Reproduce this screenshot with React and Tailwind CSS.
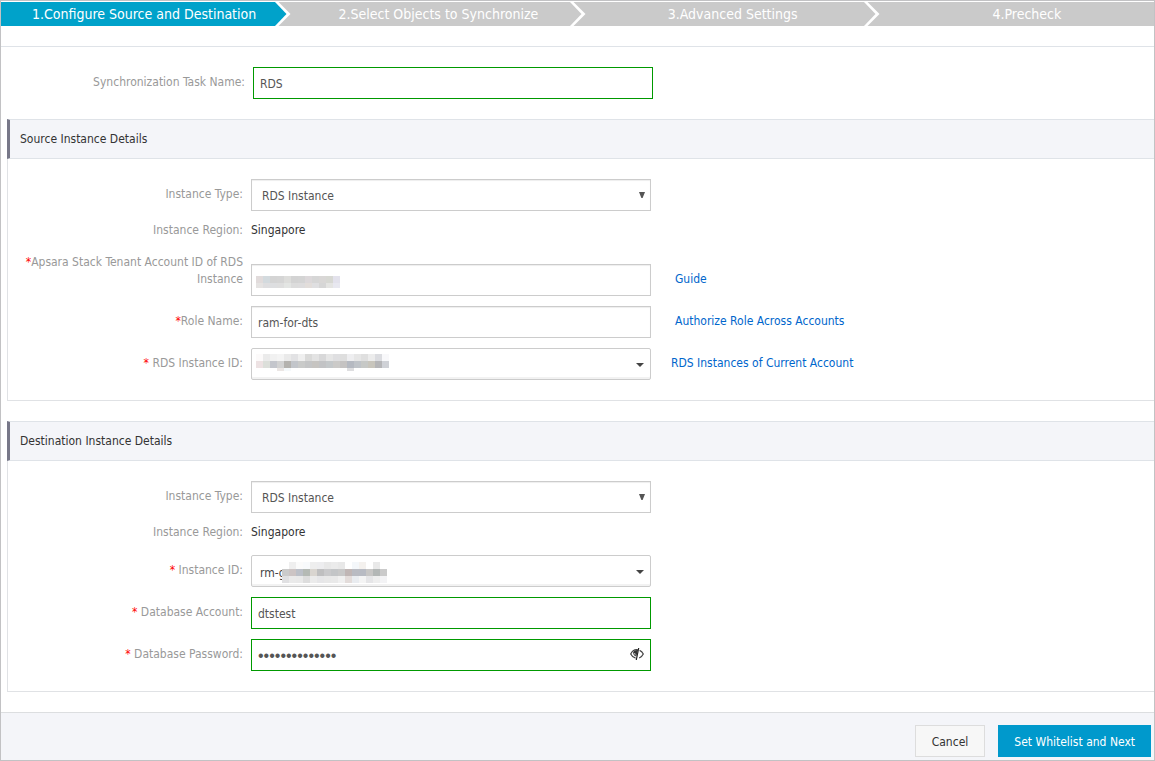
import React from 'react';

const steps = [
    "1.Configure Source and Destination",
    "2.Select Objects to Synchronize",
    "3.Advanced Settings",
    "4.Precheck"
];

const CELL = 7;

const accountMask = [
    ["#e1dbdb", "#d3dade", "#d4d4d4", "#d5d5d5", "#dddddb", "#d3d3d3", "#d4d4d4", "#dcd8da", "#d6d6d6", "#d9d7d6", "#d7d8d3", "#e3e2ec"],
    ["#e5e3e2", "#dedee0", "#dddee0", "#dedede", "#e3e5e3", "#dcdcdc", "#dddcdd", "#e2ddda", "#dfdfe1", "#d6d6d6", "#e4e4e2", "#e8e8f0"]
];

const sourceIdMask = [
    ["#fcfafa", "#ebebeb", "#f1f1f1", "#f4f4f4", "#eaeaea", "#e2e2e4", "#efefef", "#dadad9", "#e3e3e3", "#d8d8d9", "#e6e6e6", "#dfdfe1", "#dedede", "#eeeef0", "#e6e6e6", "#dfdfdf", "#ececec", "#dbdce0", "#f8f8fa"],
    ["#ede2e3", "#dcdfda", "#c4c6cc", "#d2d2d2", "#b4b2ae", "#c2c5ca", "#c9cac9", "#c4c5c6", "#c6c4c1", "#c2c3c5", "#c4c8ca", "#cbcac8", "#c5c3c2", "#b5b9c1", "#bfc3c8", "#c6c8c6", "#c8c5bc", "#b5b5b7", "#cfd1d6"],
    ["", "", "", "#ebe6e4", "#f5f9fb", "", "", "", "", "", "", "", "", "#dedee0"]
];

const targetIdMask = [
    ["", "#efefef", "#fbfbfb", "#f8fafc", "#eeeeee", "#ededef", "#e8e8e8", "#ebebeb", "#e8e8e8", "", "#f4f7fa", "#f4f1ee", "", "#e9e9e9"],
    ["#cbcbcb", "#ccc4c4", "#bcc0c8", "#b5bab5", "#d9d5d0", "#bfbfc0", "#c9c9cb", "#c3c5c7", "#c8c8c8", "#c0b6b5", "#b9bbc2", "#b8bbc3", "#c7c6c5", "#b3b7b6", "#cacaca"],
    ["#e0e0e2", "#eaeaea", "#e9e9e9", "#dddddd", "#ebebeb", "#e6e6e8", "#e8e8e8", "#e9e9e9", "#f0f0f0", "#e3dcda", "#e9ecf0", "#f4f4f4", "#e5e5e7", "#eeeeee", "#f3f3f5"]
];

// The last row of sourceIdMask is only 3px tall, so the height is passed in.
const Mask = ({ rows, height, className }) => (
    <svg className={`absolute pointer-events-none ${className}`} width={CELL * 19} height={height} shapeRendering="crispEdges" aria-hidden="true">
        {rows.map((row, y) => row.map((color, x) => color && (
            <rect key={`${x}-${y}`} x={x * CELL} y={y * CELL} width={CELL} height={CELL} fill={color} />
        )))}
    </svg>
);

const Step = ({ label, active, last }) => (
    <li className={`relative flex-1 h-6 flex items-center justify-center text-sm text-white ${active ? 'bg-[#00a2ca]' : 'bg-[#cacaca]'}`} aria-current={active ? 'step' : undefined}>
        {label}
        {!last && (
            <svg className="absolute right-0 top-0" width="16" height="24" viewBox="0 0 16 24" aria-hidden="true">
                <rect width="16" height="24" fill="#cacaca" />
                <path d="M0 0H3.5L15.5 12L3.5 24H0Z" fill="#fff" />
                <path d="M0 0L11.5 12L0 24Z" fill={active ? '#00a2ca' : '#cacaca'} />
            </svg>
        )}
    </li>
);

const Required = () => <span className="text-[#f00]">*</span>;

const Row = ({ id, label, children }) => (
    <div className="flex items-end">
        <label htmlFor={id} className="w-[235px] shrink-0 pt-px pb-2 text-right leading-[17px] text-[#999]">{label}</label>
        <div className="ml-2 flex items-end">{children}</div>
    </div>
);

const Region = () => (
    <div className="flex pt-px pb-1 leading-[17px]">
        <span className="w-[235px] shrink-0 text-right text-[#999]">Instance Region:</span>
        <span className="ml-2 text-[#333]">Singapore</span>
    </div>
);

const TextField = ({ id, type = "text", valid, value, children }) => (
    <div className="relative w-[400px]">
        <input
            id={id}
            type={type}
            defaultValue={value}
            autoComplete="off"
            className={`block w-full h-8 border px-[6px] pt-[2px] text-[#555] outline-none ${type === 'password' ? "font-['Liberation_Sans',sans-serif] text-base" : ''} ${valid ? 'border-[#090]' : 'border-[#ccc] shadow-[inset_0_1px_1px_#eee]'}`}
        />
        {children}
    </div>
);

const TypeSelect = ({ id }) => (
    <div className="relative w-[400px]">
        <select id={id} className="block appearance-none w-full h-8 border border-[#ccc] bg-white px-[10px] pt-[2px] text-[#555] outline-none shadow-[inset_0_1px_1px_#eee]">
            <option>RDS Instance</option>
        </select>
        <svg className="absolute right-[6px] top-[13px] pointer-events-none" width="6" height="6" viewBox="0 0 6 6" aria-hidden="true">
            <path d="M0 0H6L3.6 6H2.4Z" fill="#555" />
        </svg>
    </div>
);

const ComboSelect = ({ id, value, children }) => (
    <div className="relative w-[400px]">
        <select id={id} className="block appearance-none w-full h-8 rounded-xs border border-[#ccc] bg-white px-2 pt-[3px] text-[#444] outline-none shadow-[inset_0_-2px_0_#f2f2f2]">
            <option>{value}</option>
        </select>
        <svg className="absolute right-[7px] top-[15px] pointer-events-none" width="8" height="4" viewBox="0 0 8 4" aria-hidden="true">
            <path d="M0 0H8L4 4Z" fill="#444" />
        </svg>
        {children}
    </div>
);

const Panel = ({ title, children }) => (
    <section className="ml-[6px] mb-5">
        <h2 className="flex h-10 items-center border-y border-[#dfe3e8] border-l-[3px] border-l-[#778] bg-[#f4f5f9] pl-[10px] text-[#333]">{title}</h2>
        <div className="flex flex-col gap-[10px] border-l border-b border-[#e0e2e5] py-5">{children}</div>
    </section>
);

const HiddenEye = () => (
    <svg width="14" height="14" viewBox="0 0 14 14" fill="none" aria-hidden="true">
        <path d="M7.8 2.7C4.6 2.2 2 4.2 0.7 7C1.8 9.2 3.4 10.6 5.6 11.1" stroke="#444" strokeWidth="1.2" />
        <path d="M8 3C5.4 2.7 3.4 4 3.2 5.6C3.1 7.8 4.6 9.2 6.3 9.4Z" fill="#333" />
        <path d="M4.6 6C4.7 7.2 5.2 8 5.9 8.4" stroke="#ccc" strokeWidth="1" />
        <path d="M8.7 1L6.3 13" stroke="#222" strokeWidth="1.2" />
        <path d="M9.6 3.4C11.3 4.1 12.5 5.4 13.3 7C12.3 9.1 10.8 10.3 9.2 11" stroke="#444" strokeWidth="1.2" />
    </svg>
);

const App = () => {
    return (
        <div className="min-h-screen border border-[#c2c2c4] bg-white font-['DejaVu_Sans_Condensed','DejaVu_Sans',sans-serif] text-xs overflow-hidden">
            <div className="overflow-hidden border-b border-[#dfe3e8] pt-px pb-5">
                <ol className="flex -ml-1 -mr-5">
                    {steps.map((label, idx) => (
                        <Step key={label} label={label} active={idx === 0} last={idx === steps.length - 1} />
                    ))}
                </ol>
            </div>

            <form onSubmit={(e) => e.preventDefault()}>
                <div className="py-5 pl-[9px]">
                    <Row id="task-name" label="Synchronization Task Name:">
                        <TextField id="task-name" value="RDS" valid />
                    </Row>
                </div>

                <Panel title="Source Instance Details">
                    <Row id="source-type" label="Instance Type:">
                        <TypeSelect id="source-type" />
                    </Row>
                    <Region />
                    <Row id="account-id" label={<><Required />Apsara Stack Tenant Account ID of RDS Instance</>}>
                        <TextField id="account-id">
                            <Mask rows={accountMask} height={12} className="left-[5px] top-3" />
                        </TextField>
                        <a href="#guide" className="ml-6 pb-2 leading-[17px] text-[#06c]">Guide</a>
                    </Row>
                    <Row id="role-name" label={<><Required />Role Name:</>}>
                        <TextField id="role-name" value="ram-for-dts" />
                        <a href="#authorize" className="ml-6 pb-2 leading-[17px] text-[#06c]">Authorize Role Across Accounts</a>
                    </Row>
                    <Row id="source-id" label={<><Required /> RDS Instance ID:</>}>
                        <ComboSelect id="source-id">
                            <Mask rows={sourceIdMask} height={17} className="left-[5px] top-[6px]" />
                        </ComboSelect>
                        <a href="#instances" className="ml-5 pb-2 leading-[17px] text-[#06c]">RDS Instances of Current Account</a>
                    </Row>
                </Panel>

                <Panel title="Destination Instance Details">
                    <Row id="target-type" label="Instance Type:">
                        <TypeSelect id="target-type" />
                    </Row>
                    <Region />
                    <Row id="target-id" label={<><Required /> Instance ID:</>}>
                        <ComboSelect id="target-id" value="rm-g">
                            <Mask rows={targetIdMask} height={21} className="left-[31px] top-[7px]" />
                        </ComboSelect>
                    </Row>
                    <Row id="db-account" label={<><Required /> Database Account:</>}>
                        <TextField id="db-account" value="dtstest" valid />
                    </Row>
                    <Row id="db-password" label={<><Required /> Database Password:</>}>
                        <TextField id="db-password" type="password" value="dtstest1234567" valid>
                            <button type="button" className="absolute right-[7px] top-2" aria-label="Show password">
                                <HiddenEye />
                            </button>
                        </TextField>
                    </Row>
                </Panel>

                <div className="flex justify-end border-t border-[#dcdee0] bg-[#f4f5f9] pt-3 pr-[3px] pb-[3px]">
                    <button type="button" className="h-8 border border-[#ddd] bg-[#f7f7f7] px-4 pt-px text-[#333]">Cancel</button>
                    <button type="submit" className="ml-[13px] h-8 bg-[#09c] px-4 pt-px text-white">Set Whitelist and Next</button>
                </div>
            </form>
        </div>
    );
};
export default App;
